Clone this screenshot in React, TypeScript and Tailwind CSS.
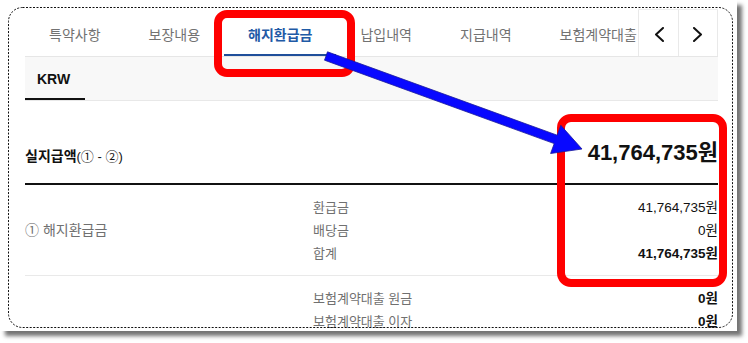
import { ReactNode } from 'react';

const FONT = '"Liberation Sans", "Noto Sans CJK KR", sans-serif';

const TABS = ['특약사항', '보장내용', '해지환급금', '납입내역', '지급내역', '보험계약대출'];

function Chevron({ dir }: { dir: 'left' | 'right' }) {
  return (
    <svg width="10" height="15" viewBox="0 0 10 15" fill="none">
      <polyline
        points={dir === 'left' ? '9,1 2,7.5 9,14' : '1,1 8,7.5 1,14'}
        stroke="#111"
        strokeWidth="2"
        strokeLinecap="round"
        strokeLinejoin="round"
      />
    </svg>
  );
}

function Row({ label, items }: { label?: ReactNode; items: { k: string; v: string; bold?: boolean }[] }) {
  return (
    <div className="flex items-center border-b border-[#e9e9e9] pt-[11px] pb-[10px]">
      <div className="w-[288px] text-[14px] text-[#707070]">{label}</div>
      <div className="flex-1">
        {items.map((it) => (
          <div key={it.k} className="flex justify-between leading-[23px]">
            <span className="text-[13px] text-[#707070]">{it.k}</span>
            <span className={it.bold ? 'text-[13.5px] font-bold text-[#111]' : 'text-[13.5px] text-[#111]'}>{it.v}</span>
          </div>
        ))}
      </div>
    </div>
  );
}

export default function App() {
  return (
    <div className="relative h-[343px] w-[748px] bg-white" style={{ fontFamily: FONT }}>
      <div className="relative h-[331px] w-[737px] overflow-hidden bg-white shadow-[5px_5px_4px_rgba(0,0,0,0.55)]">
        <div className="pl-[25px] pr-[19px] pt-[9px]">
          {/* tabs */}
          <div className="flex h-[48px] border-b border-[#e6e6e6]">
            <div className="flex flex-1 overflow-hidden">
              {TABS.map((t) => (
                <div
                  key={t}
                  className={
                    t === '해지환급금'
                      ? 'flex shrink-0 items-center whitespace-nowrap border-b-2 border-[#1f4e9a] px-[24px] pt-[7px] text-[14px] font-semibold text-[#1f5aa6]'
                      : 'flex shrink-0 items-center whitespace-nowrap border-b-2 border-transparent px-[24px] pt-[7px] text-[14px] text-[#727272]'
                  }
                >
                  {t}
                </div>
              ))}
            </div>
            <div className="flex border-t border-[#eee]">
              <div className="flex w-[40px] items-center justify-center border-l border-[#e9e9e9] pt-[2px]">
                <Chevron dir="left" />
              </div>
              <div className="flex w-[40px] items-center justify-center border-x border-[#e9e9e9] pt-[2px]">
                <Chevron dir="right" />
              </div>
            </div>
          </div>

          {/* currency */}
          <div className="flex h-[44px] border-b border-[#e8e8e8] bg-[#f8f8f8]">
            <div className="flex w-[60px] items-center border-b-2 border-[#111] pl-[12px] pt-[3px] text-[14px] font-bold text-[#111]">
              KRW
            </div>
          </div>

          {/* total */}
          <div className="flex h-[84px] items-end justify-between border-b-2 border-[#111] pb-[16px]">
            <div className="text-[14px] font-bold text-[#111]">
              실지급액<span className="text-[13px] font-normal">(① - ②)</span>
            </div>
            <div className="pb-[3px] text-[22px] font-bold leading-none text-[#111]">41,764,735원</div>
          </div>

          <Row
            label="① 해지환급금"
            items={[
              { k: '환급금', v: '41,764,735원' },
              { k: '배당금', v: '0원' },
              { k: '합계', v: '41,764,735원', bold: true },
            ]}
          />
          <Row
            items={[
              { k: '보험계약대출 원금', v: '0원', bold: true },
              { k: '보험계약대출 이자', v: '0원', bold: true },
            ]}
          />
        </div>

        {/* annotations */}
        <svg className="pointer-events-none absolute left-0 top-0" width="737" height="331">
          <rect x="8.5" y="7.5" width="724" height="320" rx="14" fill="none" stroke="#111" strokeWidth="1" strokeDasharray="2 1.5" />
          <rect x="218" y="14" width="133" height="59" rx="9" fill="none" stroke="#ff0000" strokeWidth="8" />
          <rect x="561" y="118" width="162" height="165" rx="10" fill="none" stroke="#ff0000" strokeWidth="8" />
          <polygon
            points="327.5,51.8 557.2,135.2 560.8,125.3 582,149 550.6,153.5 554.2,143.6 324.5,60.2"
            fill="#0808ff"
            stroke="#1a1a99"
            strokeWidth="0.8"
            strokeLinejoin="round"
          />
        </svg>
      </div>
    </div>
  );
}
